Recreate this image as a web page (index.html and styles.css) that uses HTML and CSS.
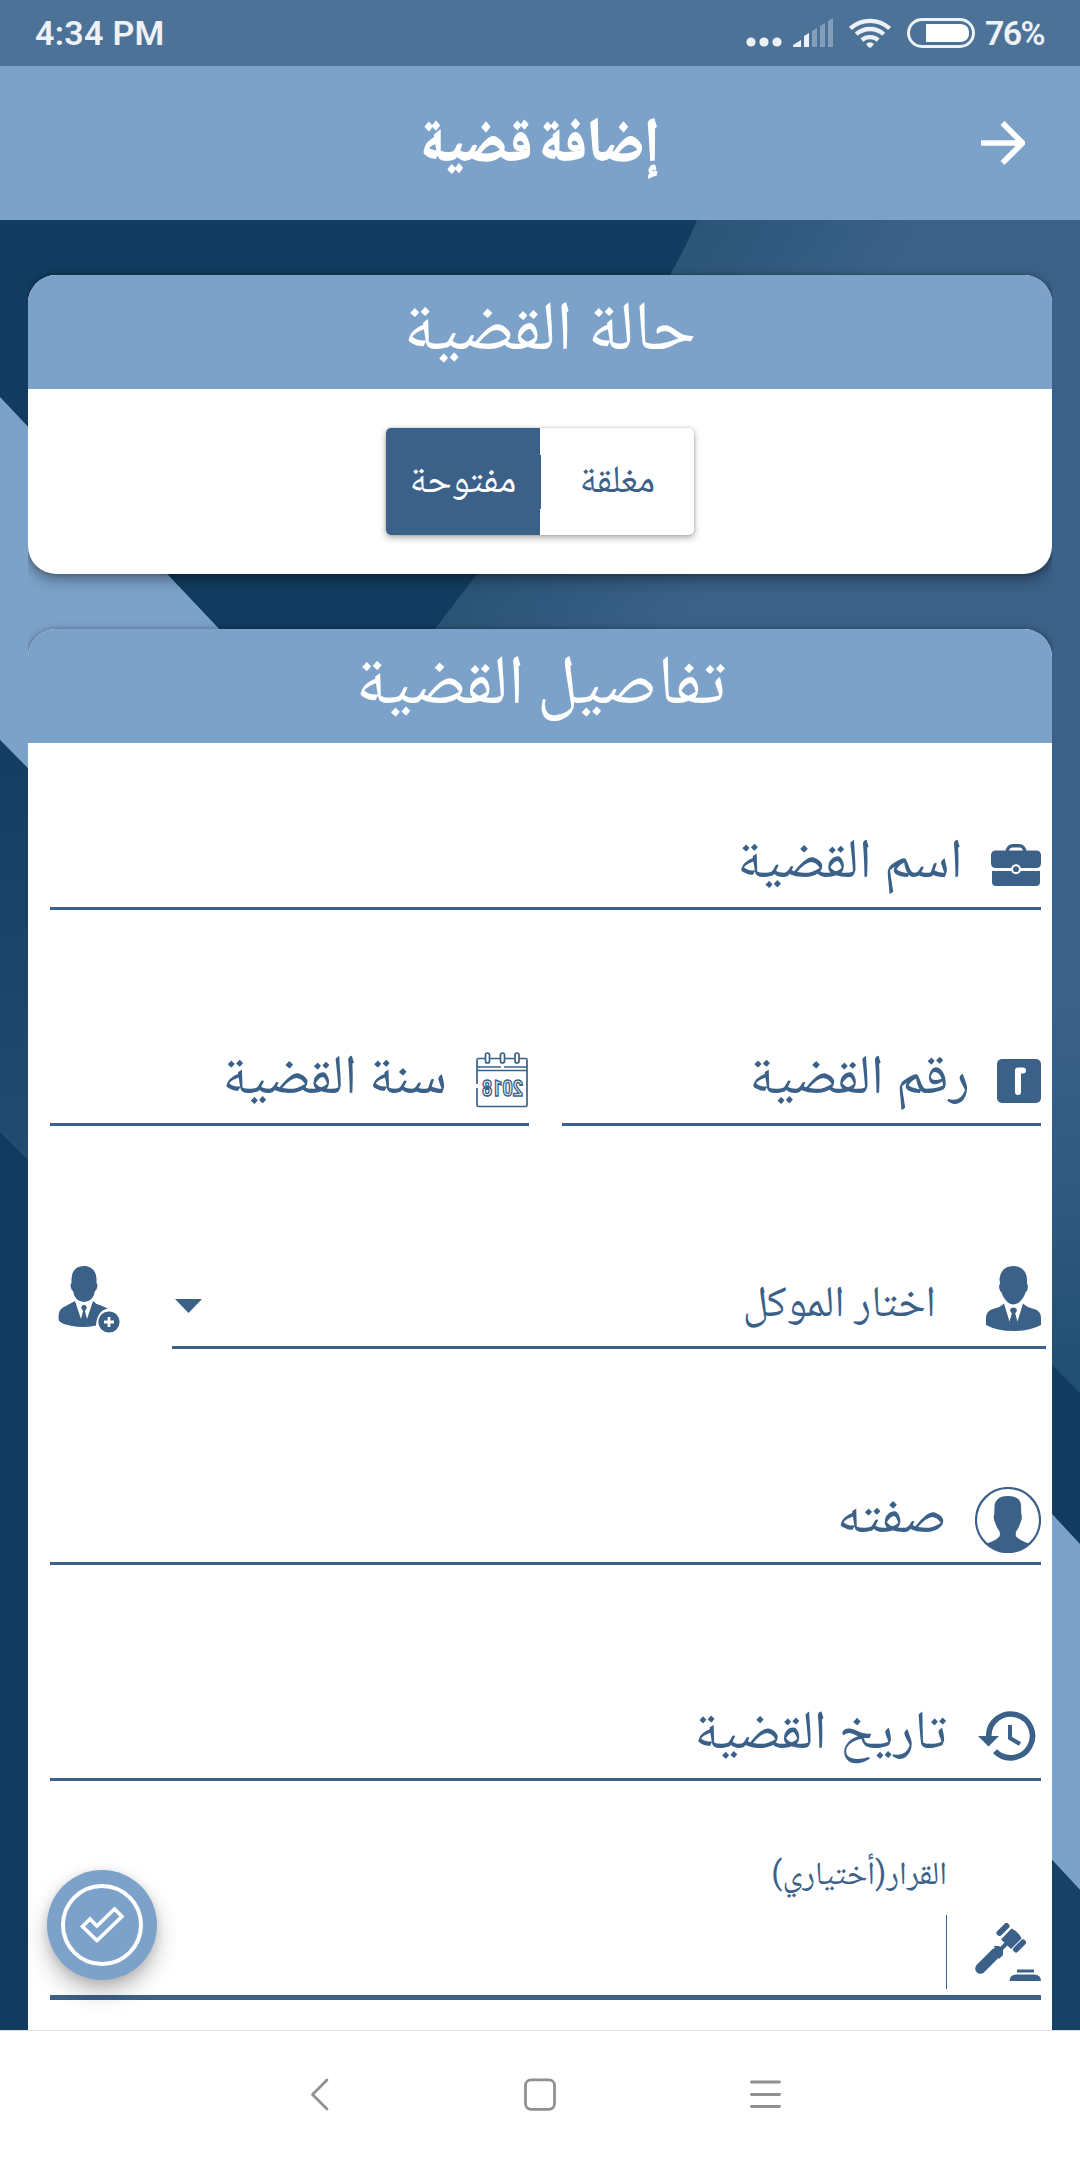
FILE: index.html
```html
<!DOCTYPE html>
<html lang="ar" dir="rtl">
<head>
<meta charset="utf-8">
<title>إضافة قضية</title>
<link rel="stylesheet" href="styles.css">
</head>
<body>
<div class="screen">
  <div class="statusbar" dir="ltr">
    <span class="clock">4:34 PM</span>
    <div class="indicators">
      <svg class="dots" width="36" height="10" viewBox="0 0 36 10"><circle cx="5" cy="5" r="4.6"/><circle cx="18" cy="5" r="4.6"/><circle cx="31" cy="5" r="4.6"/></svg>
      <svg class="signal" width="40" height="29" viewBox="0 0 40 29"><path d="M0 29v-2l8-5v7zM11 29V18l5-3v14z"/><path opacity=".35" d="M19 29V13l5-3v19zM27 29V8l5-3v24zM35 29V3l5-3v29z"/></svg>
      <svg class="wifi" width="42" height="30" viewBox="0 0 42 30"><g fill="none" stroke="#eef1f6" stroke-width="4.400"><path d="M1.400 10.500a29 29 0 0 1 39.200 0"/><path d="M7.200 16.200a21 21 0 0 1 27.600 0"/><path d="M12.800 22a13 13 0 0 1 16.400 0"/></g><path d="M17 26q4-3.500 8 0l-2 2.500q-2 2.500-4 0z"/></svg>
      <svg class="battery" width="68" height="30" viewBox="0 0 68 30"><rect x="1.500" y="1.500" width="65" height="27" rx="13.500" fill="none" stroke="#eef1f6" stroke-width="3"/><path fill="#fff" d="M19 6h34c6 0 9 3.500 9 9s-3 9-9 9H19z"/></svg>
      <span class="percent">76%</span>
    </div>
  </div>
  <header class="appbar">
    <h1 class="title">إضافة قضية</h1>
    <svg class="back" width="44" height="44" viewBox="0 0 44 44"><path d="M0 22h39M21.500 2l20 20-20 20" fill="none" stroke="#fff" stroke-width="5.600"/></svg>
  </header>
  <main class="content">
    <svg class="backdrop" width="1080" height="1810" viewBox="0 220 1080 1810">
      <defs>
        <linearGradient id="ridge" gradientUnits="userSpaceOnUse" x1="560" y1="380" x2="760" y2="500"><stop offset="0" stop-color="#285274"/><stop offset="1" stop-color="#3b6188"/></linearGradient>
        <linearGradient id="fold" gradientUnits="userSpaceOnUse" x1="0" y1="1000" x2="0" y2="1370"><stop offset="0" stop-color="#3b6188"/><stop offset=".5" stop-color="#315a80"/><stop offset="1" stop-color="#214f71"/></linearGradient>
        <linearGradient id="shade" gradientUnits="userSpaceOnUse" x1="0" y1="750" x2="0" y2="1150"><stop offset="0" stop-color="#133e61"/><stop offset="1" stop-color="#204c70"/></linearGradient>
      </defs>
      <path fill="#113c60" d="M0 220h1080v1810H0z"/>
      <path fill="url(#ridge)" d="M697 220h383v800H435V629l42-55L670 275q18-32 27-55z"/>
      <path fill="url(#fold)" d="M1040 1000h40v393l-40-40z"/>
      <path fill="#7ca2ca" d="M0 397l240 254v331L0 740zM1040 1501l40 43v346l-40-43z"/>
      <path fill="#174265" d="M1040 1847l40 43v140h-40z"/>
      <path fill="url(#shade)" d="M0 740l40 42v390L0 1132z"/>
    </svg>
    <section class="card">
      <h2 class="card-title status-title">حالة القضية</h2>
      <div class="status-body">
        <div class="toggle">
          <button class="option">مغلقة</button>
          <span class="divider"></span>
          <button class="option selected">مفتوحة</button>
        </div>
      </div>
    </section>
    <section class="card details">
      <h2 class="card-title">تفاصيل القضية</h2>
      <div class="form">
        <div class="field first">
          <svg class="i-case" width="50" height="42" viewBox="0 0 50 42"><path fill="none" stroke="currentColor" stroke-width="3.600" d="M16 9c0-5 3-7.200 6-7.200h6c3 0 6 2.200 6 7.200"/><rect y="6.500" width="50" height="17.500" rx="4.500"/><path d="M1 27h48v11q0 4-4 4H5q-4 0-4-4z"/><circle cx="25" cy="25.200" r="5" fill="#fff"/><circle cx="25" cy="25.200" r="2.900"/></svg>
          <span class="label">اسم القضية</span>
        </div>
        <div class="pair">
          <div class="field">
            <svg class="i-number" width="44" height="44" viewBox="0 0 44 44"><rect width="44" height="44" rx="5"/><path d="M26 11.500h-5V33" fill="none" stroke="#fff" stroke-width="6" stroke-linecap="round" stroke-linejoin="round"/></svg>
            <span class="label">رقم القضية</span>
          </div>
          <div class="field">
            <svg class="i-calendar" width="52" height="56" viewBox="0 0 52 56"><g fill="none" stroke="currentColor" stroke-width="1.700"><path d="M9 6.500H2.500Q1 6.500 1 8v24M1 36v17q0 1.500 1.500 1.500h47q1.500 0 1.500-1.500V8q0-1.500-1.500-1.500H43M14 6.500h10M28 6.500h10M1 15h24M28 15h23M1 18.500h50"/><rect x="9.500" y="1" width="4" height="10" rx="2"/><rect x="24.500" y="1" width="4" height="10" rx="2"/><rect x="39" y="1" width="4" height="10" rx="2"/></g><text class="year" direction="ltr" transform="translate(47 44) scale(-1 1)" textLength="41" lengthAdjust="spacingAndGlyphs">2018</text></svg>
            <span class="label">سنة القضية</span>
          </div>
        </div>
        <div class="client">
          <div class="field select">
            <svg class="i-person" width="55" height="65" viewBox="0 0 55 65"><path d="M27.500 0C36 0 41 6 41 14v4q1.500 1 .5 5-.5 3-2 3.500C37 34 32 38.500 27.500 38.500S18 34 15.500 26.500q-1.500-.5-2-3.500-1-4 .5-5l-.500-5Q15 0 27.500 0zM18 37.500l5.500 18 2.300-8-1.800-3q.5-3 3.500-3t3.500 3l-1.800 3 2.300 8 5.500-18q4 4 11 5.500 7 2 7 9V59q-11 6-27.500 6T0 59v-7q0-7 7-9 7-1.500 11-5.500z"/></svg>
            <span class="label">اختار الموكل</span>
            <svg class="i-drop" width="27" height="14" viewBox="0 0 27 14"><path d="M0 0h27L13.500 14z"/></svg>
          </div>
          <svg class="i-add" width="62" height="67" viewBox="0 0 62 67"><path d="M26 0c8 0 12.500 6 12.500 13v4q1.500 1 .5 5-.5 2.500-2 3-2 11-11 11t-11-11q-1.500-.5-2-3-1-4 .5-5V13Q14 0 26 0zM17 35l6 18 2-8-1.800-3q.3-3 2.800-3t2.800 3L27 45l2 8 6-18q3 3.500 8 4.500l7 3q-11 2-12 17-13 3-26 0-7-1-11-4.500-2-10 4-13.500l12-6.500z"/><circle cx="51" cy="56" r="10.600"/><path d="M51 51v10M46 56h10" stroke="#fff" stroke-width="2.800"/></svg>
        </div>
        <div class="field">
          <svg class="i-profile" width="66" height="66" viewBox="0 0 66 66"><circle cx="33" cy="33" r="32" fill="none" stroke="currentColor" stroke-width="2.200"/><path d="M33 9c10 0 13 5 13 10l.3 8q1.500 4-1 9-1.500 5-4.500 9v4q3 4 13 7.500-9 9.500-21 9.500t-21-9.500q10-3.500 13-7.500v-4q-3-4-4.500-9-2.500-5-1-9l.2-8C20 14 23 9 33 9z"/></svg>
          <span class="label">صفته</span>
        </div>
        <div class="field">
          <svg class="i-history" width="58" height="50" viewBox="0 0 58 50"><g fill="none" stroke="currentColor"><path stroke-width="5.600" d="M10.700 27V25A21.900 21.900 0 1 1 17 40.300"/><path stroke-width="4" d="M32 14v13l10 6"/></g><path d="M0 25h21L10.500 35.500z"/></svg>
          <span class="label date-label">تاريخ القضية</span>
        </div>
        <div class="field decision">
          <svg class="i-gavel" width="66" height="58" viewBox="0 0 66 58"><g stroke="currentColor" stroke-linecap="round"><path stroke-width="6" d="M24.500 10l7-7M41 26.500l7-7"/><path stroke-width="10.500" d="M5.500 45.500L21 30"/><path stroke-width="4" d="M25 27l7-7"/></g><path d="M26 16.500L36.500 5.500q7 3 10 10L36 26zM19 23h5l4 4v5l-4 4zM42 46.500h17v3H42zM34.500 58q0-6.500 7-6.500h17.500q7 0 7 6.500z"/></svg>
          <div class="entry">
            <span class="float-label">القرار(أختياري)</span>
            <span class="cursor"></span>
          </div>
        </div>
      </div>
    </section>
    <button class="fab" aria-label="حفظ"><svg width="82" height="82" viewBox="0 0 82 82"><g fill="none" stroke="#fff" stroke-width="4"><circle cx="41" cy="41" r="39"/><path stroke-width="3.600" d="M21.500 42.500l7.500-7.500 7 7 17.500-17L61 32.500 36 56.500z"/></g></svg></button>
  </main>
  <nav class="navbar" dir="ltr">
    <svg width="32" height="33" viewBox="0 0 32 33"><path d="M29 2L14.500 16.500 29 31"/></svg>
    <svg width="32" height="33" viewBox="0 0 32 33"><rect x="1.500" y="1.800" width="29" height="29.500" rx="5.500"/></svg>
    <svg width="32" height="33" viewBox="0 0 32 33"><path d="M1.500 4h28M1.500 16.500h28M1.500 28.500h28"/></svg>
  </nav>
</div>
</body>
</html>
```
FILE: styles.css
```css
* { box-sizing: border-box; margin: 0; padding: 0; }
body { width: 1080px; height: 2160px; overflow: hidden; font-family: "Noto Naskh Arabic", "DejaVu Sans", sans-serif; color: #3b6188; }
svg { display: block; flex: none; fill: currentColor; }
button { border: 0; background: none; font: inherit; color: inherit; }
.screen { height: 2160px; display: flex; flex-direction: column; }

.statusbar { height: 66px; background: #4c7298; color: #eef1f6; display: flex; justify-content: space-between; padding: 0 36px 0 35px; font: 600 34px/67px Roboto, sans-serif; }
.clock { letter-spacing: .3px; }
.indicators { display: flex; height: 66px; }
.dots { margin: 37px 11px 0 0; }
.signal { margin: 18px 16px 0 0; }
.wifi { margin: 18px 16px 0 0; }
.battery { margin: 18px 10px 0 0; }
.percent { width: 59px; letter-spacing: -1.7px; }

.appbar { height: 154px; background: #7ca2ca; color: #fff; display: grid; grid-template-columns: 44px 1fr 44px; padding: 0 55px; align-items: center; }
.title { grid-column: 2; grid-row: 1; text-align: center; font-size: 56px; font-weight: 700; line-height: 56px; padding-top: 8px; word-spacing: -5px; transform: scale(.95, 1.1); -webkit-text-stroke: 1.2px #fff; }
.back { grid-column: 1; grid-row: 1; }

.content { position: relative; height: 1810px; overflow: hidden; padding: 55px 28px 0; display: flex; flex-direction: column; gap: 55px; }
.backdrop { position: absolute; left: 0; top: 0; z-index: -1; }
.card { background: #fff; border-radius: 28px; overflow: hidden; box-shadow: 0 6px 14px rgba(0,0,0,.35), 0 0 5px rgba(0,0,0,.25); clip-path: inset(-30px 0); flex: none; }
.card-title { height: 114px; background: #7ca2ca; color: #fff; text-align: center; font-size: 69.5px; font-weight: 400; line-height: 69px; padding-top: 25px; padding-left: 2px; word-spacing: -3px; }
.status-title { padding-left: 20px; word-spacing: 0; }
.status-body { height: 185px; display: flex; justify-content: center; align-items: center; }
.toggle { display: flex; align-items: center; width: 308px; height: 107px; border-radius: 5px; overflow: hidden; box-shadow: 0 3px 7px rgba(0,0,0,.3), 0 0 3px rgba(0,0,0,.2); }
.option { flex: 1; height: 107px; font-size: 38.6px; line-height: 39px; padding-top: 4px; }
.option.selected { flex: none; width: 154px; background: #3b6188; color: #fff; }
.divider { width: 1px; height: 54px; background: #3b6188; }

.details { height: 1500px; }
.form { padding: 0 11px 0 22px; }
.field { height: 216px; display: flex; align-items: flex-end; border-bottom: 3px solid #3b6188; }
.first { height: 167px; }
.pair { display: grid; grid-template-columns: 1fr 1fr; gap: 33px; }
.label { font-size: 55.4px; line-height: 55px; margin-bottom: 14px; white-space: nowrap; }
.date-label { font-size: 54.4px; }
.i-case { margin: 0 0 21px 28px; }
.i-number { margin: 0 0 20px 27px; }
.i-calendar { margin: 0 1px 15px 29px; overflow: visible; }
.year { font: 700 22.5px Roboto, sans-serif; fill: #fff; stroke: #3b6188; stroke-width: 1.600px; }
.client { display: flex; justify-content: space-between; align-items: flex-end; height: 223px; margin-right: -5px; }
.select { width: 874px; padding-right: 5px; }
.select .label { font-size: 43.6px; line-height: 43px; margin-bottom: 18px; }
.i-person { margin: 0 0 15px 50px; }
.i-drop { margin: 0 auto 33px 3px; }
.i-add { margin: 0 0 16px 8px; }
.i-profile { margin: 0 0 9px 28px; }
.i-history { margin: 0 5px 17px 31px; }
.decision { height: 219px; border-bottom-width: 5px; }
.i-gavel { margin: 0 0 14px 28px; }
.entry { display: flex; flex-direction: column; align-items: flex-start; }
.float-label { font-family: Roboto, "Noto Naskh Arabic", sans-serif; font-size: 32.5px; line-height: 33px; margin-bottom: 25px; }
.cursor { width: 1px; height: 74px; background: #3b6188; margin-bottom: 6px; }

.fab { position: absolute; left: 47px; top: 1650px; width: 110px; height: 110px; border-radius: 50%; background: #7ca2ca; display: flex; align-items: center; justify-content: center; box-shadow: 0 12px 22px rgba(0,0,0,.25), 0 2px 10px rgba(0,0,0,.12); }

.navbar { height: 130px; background: #fff; border-top: 1px solid #e0e0e0; display: flex; justify-content: center; align-items: center; gap: 194px; padding-bottom: 2px; }
.navbar svg { fill: none; stroke: #909090; stroke-width: 2.800; stroke-linecap: round; stroke-linejoin: round; }
```
